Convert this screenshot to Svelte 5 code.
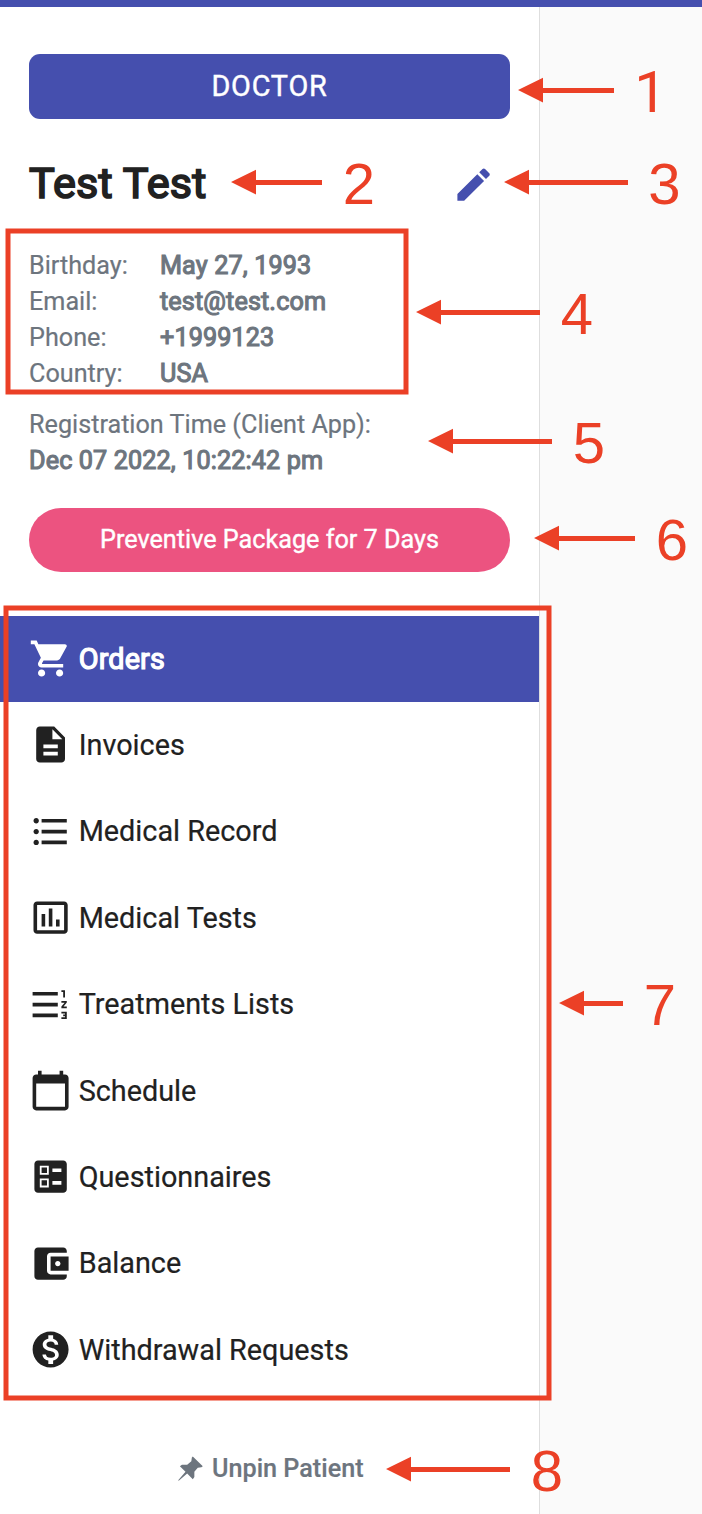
<script>
  const details = [
    ['Birthday:', 'May 27, 1993'],
    ['Email:', 'test@test.com'],
    ['Phone:', '+1999123'],
    ['Country:', 'USA']
  ];

  const menu = [
    { label: 'Orders', active: true, icon: 'M7 18c-1.1 0-1.99.9-1.99 2S5.9 22 7 22s2-.9 2-2-.9-2-2-2zM1 2v2h2l3.6 7.59-1.35 2.45c-.16.28-.25.61-.25.96 0 1.1.9 2 2 2h12v-2H7.42c-.14 0-.25-.11-.25-.25l.03-.12.9-1.63h7.45c.75 0 1.41-.41 1.75-1.03l3.58-6.49c.08-.14.12-.31.12-.48 0-.55-.45-1-1-1H5.21l-.94-2H1zm16 16c-1.1 0-1.99.9-1.99 2s.89 2 1.99 2 2-.9 2-2-.9-2-2-2z' },
    { label: 'Invoices', icon: 'M14 2H6c-1.1 0-1.99.9-1.99 2L4 20c0 1.1.89 2 1.99 2H18c1.1 0 2-.9 2-2V8l-6-6zm2 16H8v-2h8v2zm0-4H8v-2h8v2zm-3-5V3.5L18.5 9H13z' },
    { label: 'Medical Record', icon: 'M4 10.5c-.83 0-1.5.67-1.5 1.5s.67 1.5 1.5 1.5 1.5-.67 1.5-1.5-.67-1.5-1.5-1.5zm0-6c-.83 0-1.5.67-1.5 1.5S3.17 7.5 4 7.5 5.5 6.83 5.5 6 4.83 4.5 4 4.5zm0 12c-.83 0-1.5.68-1.5 1.5s.68 1.5 1.5 1.5 1.5-.68 1.5-1.5-.67-1.5-1.5-1.5zM7 19h14v-2H7v2zm0-6h14v-2H7v2zm0-8v2h14V5H7z' },
    { label: 'Medical Tests', icon: 'M9 17H7v-7h2v7zm4 0h-2V7h2v10zm4 0h-2v-4h2v4zm2.5 2.1h-15V5h15v14.1zm0-16.1h-15c-1.1 0-2 .9-2 2v14c0 1.1.9 2 2 2h15c1.1 0 2-.9 2-2V5c0-1.1-.9-2-2-2z' },
    { label: 'Treatments Lists', icon: 'M18 17h2v.5h-1v1h1v.5h-2v1h3v-4h-3v1zm1-9h1V4h-2v1h1v3zm-1 3h1.8L18 13.1v.9h3v-1h-1.8l1.8-2.1V10h-3v1zM2 5h14v2H2V5zm0 14h14v-2H2v2zm0-6h14v-2H2v2z' },
    { label: 'Schedule', icon: 'M20 3h-1V1h-2v2H7V1H5v2H4c-1.1 0-2 .9-2 2v16c0 1.1.9 2 2 2h16c1.1 0 2-.9 2-2V5c0-1.1-.9-2-2-2zm0 18H4V8h16v13z' },
    { label: 'Questionnaires', icon: 'M13 9.5h5v-2h-5v2zm0 7h5v-2h-5v2zm6 4.5H5c-1.1 0-2-.9-2-2V5c0-1.1.9-2 2-2h14c1.1 0 2 .9 2 2v14c0 1.1-.9 2-2 2zM6 11h5V6H6v5zm1-4h3v3H7V7zM6 18h5v-5H6v5zm1-4h3v3H7v-3z' },
    { label: 'Balance', icon: 'M21 18v1c0 1.1-.9 2-2 2H5c-1.11 0-2-.9-2-2V5c0-1.1.89-2 2-2h14c1.1 0 2 .9 2 2v1h-9c-1.11 0-2 .9-2 2v8c0 1.1.89 2 2 2h9zm-9-2h10V8H12v8zm4-2.5c-.83 0-1.5-.67-1.5-1.5s.67-1.5 1.5-1.5 1.5.67 1.5 1.5-.67 1.5-1.5 1.5z' },
    { label: 'Withdrawal Requests', icon: 'M12 2C6.48 2 2 6.48 2 12s4.48 10 10 10 10-4.48 10-10S17.52 2 12 2zm1.41 16.09V20h-2.67v-1.93c-1.71-.36-3.16-1.46-3.27-3.4h1.96c.1 1.05.82 1.87 2.65 1.87 1.96 0 2.4-.98 2.4-1.59 0-.83-.44-1.61-2.67-2.14-2.48-.6-4.18-1.62-4.18-3.67 0-1.72 1.39-2.84 3.11-3.21V4h2.67v1.95c1.86.45 2.79 1.86 2.85 3.39H14.3c-.05-1.11-.64-1.87-2.22-1.87-1.5 0-2.4.68-2.4 1.64 0 .84.65 1.39 2.67 1.91s4.18 1.39 4.18 3.91c-.01 1.83-1.38 2.83-3.12 3.16z' }
  ];

  // Callouts: arrow tip, arrow end, arrow axis, number centre and baseline
  const callouts = [
    { n: 1, tip: 518, end: 614, y: 90.5, x: 650.5, base: 112 },
    { n: 2, tip: 231, end: 322, y: 182.5, x: 359, base: 204 },
    { n: 3, tip: 504, end: 628, y: 182.5, x: 664.5, base: 204 },
    { n: 4, tip: 416, end: 540, y: 312.5, x: 577, base: 334 },
    { n: 5, tip: 428, end: 552, y: 441.5, x: 589, base: 463 },
    { n: 6, tip: 534, end: 635, y: 538.5, x: 672, base: 560 },
    { n: 7, tip: 559, end: 623, y: 1003.5, x: 660, base: 1025 },
    { n: 8, tip: 386, end: 510, y: 1469.5, x: 547, base: 1491 }
  ];

  const arrow = ({ tip, end, y }) =>
    `M${tip} ${y - 0.5}L${tip + 25} ${y - 12.7}V${y - 2.5}H${end}V${y + 2.5}H${tip + 25}V${y + 11.9}Z`;
</script>

<div class="page">
  <header></header>
  <aside>
    <div class="profile">
      <button class="role">DOCTOR</button>
      <div class="name">
        <h1>Test Test</h1>
        <svg class="icon" viewBox="0 0 24 24"><path d="M3 17.25V21h3.75L17.81 9.94l-3.75-3.75L3 17.25zM20.71 7.04c.39-.39.39-1.02 0-1.41l-2.34-2.34c-.39-.39-1.02-.39-1.41 0l-1.83 1.83 3.75 3.75 1.83-1.83z" /></svg>
      </div>
      <dl>
        {#each details as [key, value]}
          <dt>{key}</dt>
          <dd class="strong">{value}</dd>
        {/each}
      </dl>
      <div class="registered">
        <div>Registration Time (Client App):</div>
        <div class="strong">Dec 07 2022, 10:22:42 pm</div>
      </div>
      <button class="package">Preventive Package for 7 Days</button>
    </div>
    <nav>
      {#each menu as item}
        <div class="item" class:active={item.active}>
          <svg class="icon" viewBox="0 0 24 24"><path d={item.icon} /></svg>
          <span>{item.label}</span>
        </div>
      {/each}
    </nav>
    <div class="unpin">
      <svg viewBox="0 0 24 24"><path d="M14.2.4 23.8 9.8 22.5 10.7 19 11.2 15.7 15.2 15.7 20.2 14.2 22.2 8.8 16.8.7 23.8.2 23.3 7.2 15.2 1.8 9.8 3.8 8.3 8.8 8.3 12.8 5 13.3 1.5z" /></svg>
      <span>Unpin Patient</span>
    </div>
  </aside>

  <svg class="notes" viewBox="0 0 702 1514">
    <rect x="8" y="231" width="398" height="161" />
    <rect x="6" y="608" width="543" height="790" />
    {#each callouts as c}
      <path d={arrow(c)} />
      <text class:one={c.n === 1} x={c.x} y={c.base}>{c.n}</text>
    {/each}
  </svg>
</div>

<style>
  :global(body) {
    margin: 0;
    background: #fafafa;
  }
  .page {
    position: relative;
    box-sizing: border-box;
    width: 702px;
    height: 1514px;
    overflow: hidden;
    background: #fafafa;
    font-family: Roboto, "Liberation Sans", sans-serif;
    color: #212121;
    display: flex;
    flex-direction: column;
  }
  header {
    height: 7px;
    background: #454fae;
    flex: none;
  }
  aside {
    box-sizing: border-box;
    width: 540px;
    flex: 1;
    background: #fff;
    border-right: 1px solid #dedede;
    -webkit-text-stroke: 0.2px currentColor;
  }
  .profile {
    display: flex;
    flex-direction: column;
    padding: 47px 29px 0;
    color: #6d757e;
    font-size: 25.2px;
    line-height: 36px;
  }
  button {
    border: 0;
    padding: 0 0 2px;
    color: #fff;
    font-family: inherit;
    -webkit-text-stroke: 0.4px currentColor;
  }
  .role {
    height: 65px;
    border-radius: 11px;
    background: #454fae;
    font-size: 28.8px;
    letter-spacing: 0.8px;
  }
  .name {
    display: flex;
    align-items: center;
    justify-content: space-between;
    height: 60px;
    margin-top: 35px;
    padding-right: 15px;
  }
  h1 {
    margin: 0;
    font-size: 43.2px;
    line-height: 60px;
    font-weight: 400;
    letter-spacing: 0.2px;
    color: #212121;
    -webkit-text-stroke: 1.7px #212121;
  }
  .name .icon {
    fill: #454fae;
    margin-top: 2px;
  }
  .icon {
    width: 43.2px;
    height: 43.2px;
    flex: none;
    fill: currentColor;
  }
  dl {
    display: grid;
    grid-template-columns: 131px 1fr;
    margin: 34px 0 0;
  }
  dd {
    margin: 0;
  }
  .strong {
    letter-spacing: 0.12px;
    -webkit-text-stroke: 1.1px currentColor;
  }
  .registered {
    margin-top: 15px;
  }
  .package {
    height: 64px;
    margin-top: 29px;
    border-radius: 32px;
    background: #ec5380;
    font-size: 25.2px;
  }
  nav {
    margin-top: 44px;
  }
  .item {
    box-sizing: border-box;
    display: flex;
    align-items: center;
    gap: 7px;
    height: 86.4px;
    padding: 0 0 1px 28.5px;
    font-size: 28.8px;
  }
  .active {
    background: #454fae;
    color: #fff;
  }
  .active span {
    letter-spacing: 0.15px;
    -webkit-text-stroke: 1.2px currentColor;
  }
  .unpin {
    display: flex;
    align-items: center;
    gap: 9px;
    height: 40px;
    margin-top: 55px;
    padding-left: 178px;
    font-size: 25.2px;
    font-weight: 500;
    color: #6d757e;
  }
  .unpin svg {
    width: 25px;
    height: 25px;
    fill: currentColor;
  }
  .notes {
    position: absolute;
    inset: 0;
    width: 702px;
    height: 1514px;
    fill: #eb4026;
  }
  .notes rect {
    fill: none;
    stroke: #eb4026;
    stroke-width: 5;
  }
  .notes text {
    font: 58px "Liberation Sans", Arial, sans-serif;
    text-anchor: middle;
  }
  .notes .one {
    font-family: Roboto, sans-serif;
  }
</style>
